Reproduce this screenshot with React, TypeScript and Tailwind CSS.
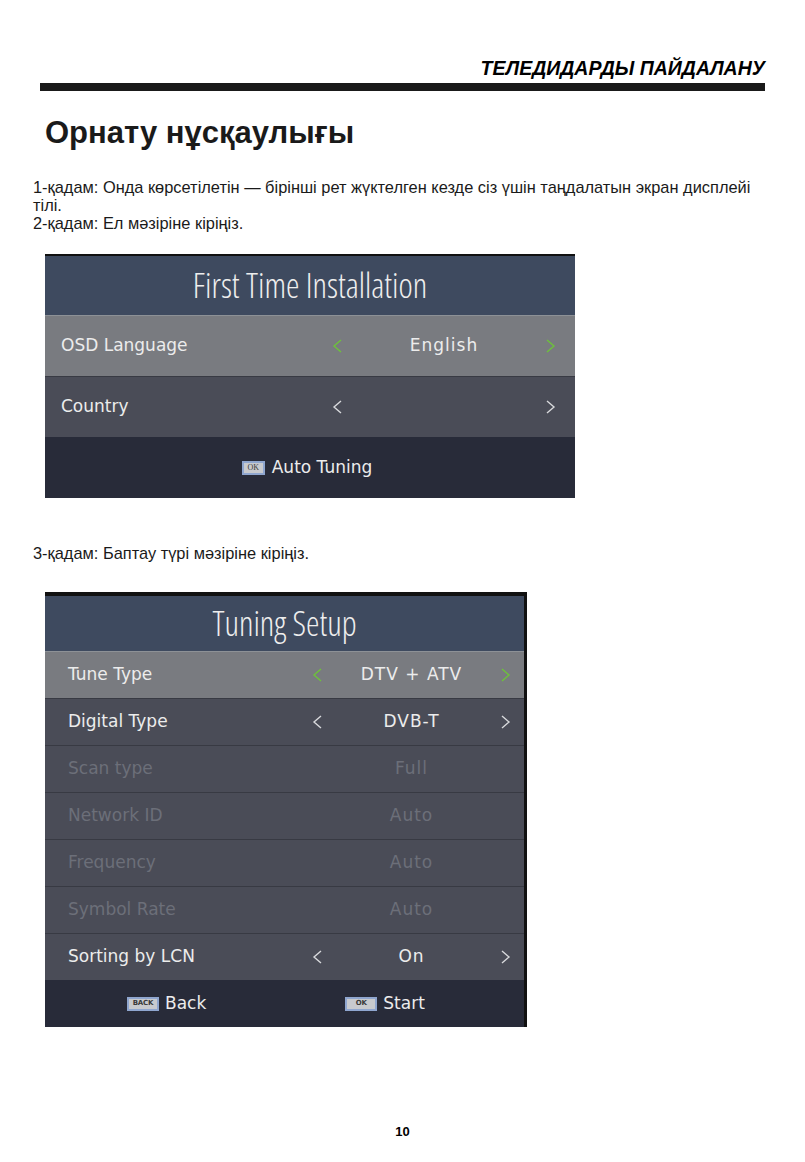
import type { ReactNode } from "react";

const doc = { fontFamily: '"Liberation Sans", Arial, sans-serif' };
const tv = { fontFamily: '"DejaVu Sans", Verdana, sans-serif' };
const tvTitle = { fontFamily: '"Open Sans", "DejaVu Sans", sans-serif', fontStretch: "condensed" as const };

function Chevron({ dir, green }: { dir: "l" | "r"; green?: boolean }) {
  return (
    <svg width="11" height="16" viewBox="0 0 11 16" className="shrink-0">
      <polyline
        points={dir === "l" ? "9,2 2,8 9,14" : "2,2 9,8 2,14"}
        fill="none"
        stroke={green ? "#6dc23a" : "#d8d9dc"}
        strokeWidth="1.4"
      />
    </svg>
  );
}

function KeyIcon({ label, wide }: { label: string; wide?: boolean }) {
  return (
    <span
      className={`inline-flex h-[14px] items-center justify-center border-2 border-[#8fa6cf] bg-[#c8cace] text-[#3a3a3a] ${
        wide ? "w-[32px] text-[7px] font-bold tracking-tight" : "w-[23px] text-[8px]"
      }`}
      style={{ fontFamily: wide ? '"DejaVu Sans", sans-serif' : '"Liberation Serif", serif' }}
    >
      {label}
    </span>
  );
}

type RowProps = {
  label: string;
  value?: string;
  active?: boolean;
  disabled?: boolean;
  arrows?: boolean;
  cols: string;
  h: string;
  pad: string;
  first?: boolean;
};

function Row({ label, value, active, disabled, arrows = true, cols, h, pad, first }: RowProps) {
  const bg = active ? "bg-[#797b80]" : "bg-[#4a4c57]";
  const line = first ? "border-[#8d9196]" : "border-[#383a43]";
  const text = disabled ? "text-[#6c6f79]" : "text-[#ececec]";
  return (
    <div className={`grid ${cols} ${h} ${pad} ${bg} items-center border-t ${line} ${text} text-[17px]`} style={tv}>
      <span>{label}</span>
      <span>{arrows && <Chevron dir="l" green={active} />}</span>
      <span className="text-center tracking-[1px]">{value}</span>
      <span>{arrows && <Chevron dir="r" green={active} />}</span>
    </div>
  );
}

function Footer({ children, h }: { children: ReactNode; h: string }) {
  return (
    <div className={`flex ${h} items-center bg-[#282b39] text-[17px] text-[#ececec]`} style={tv}>
      {children}
    </div>
  );
}

export default function App() {
  const cols1 = "grid-cols-[271px_11px_202px_11px]";
  const cols2 = "grid-cols-[244px_11px_177px_11px]";
  return (
    <div className="min-h-[1162px] w-[805px] bg-white text-black" style={doc}>
      <div className="flex flex-col pt-[57px]">
        <div className="pr-[40px] text-right text-[19.5px] leading-[22px] font-bold italic">ТЕЛЕДИДАРДЫ ПАЙДАЛАНУ</div>
        <div className="mx-[40px] mt-[4px] h-[8px] bg-[#1a1a1a]" />
      </div>

      <h1 className="mt-[24px] pl-[45px] text-[31px] leading-[36px] font-bold text-[#1a1a1a]">Орнату нұсқаулығы</h1>

      <div className="mt-[27px] pl-[33px] pr-[40px] text-[16.4px] leading-[18px] text-[#1a1a1a]">
        <p>1-қадам: Онда көрсетілетін — бірінші рет жүктелген кезде сіз үшін таңдалатын экран дисплейі тілі.</p>
        <p>2-қадам: Ел мәзіріне кіріңіз.</p>
      </div>

      <div className="ml-[45px] mt-[22px] flex w-[530px] flex-col border-t-[2px] border-[#111]">
        <div className="flex h-[59px] items-center justify-center bg-[#3e4a5f] text-[34px] font-light text-[#eeeeee]" style={tvTitle}>
          First Time Installation
        </div>
        <Row label="OSD Language" value="English" active first cols={cols1} h="h-[61px]" pad="pl-[16px]" />
        <Row label="Country" value="" cols={cols1} h="h-[61px]" pad="pl-[16px]" />
        <Footer h="h-[61px]">
          <div className="flex w-full items-center justify-center gap-[7px] pr-[6px]">
            <KeyIcon label="OK" />
            <span>Auto Tuning</span>
          </div>
        </Footer>
      </div>

      <p className="mt-[46px] pl-[33px] text-[16.4px] leading-[18px] text-[#1a1a1a]">3-қадам: Баптау түрі мәзіріне кіріңіз.</p>

      <div className="ml-[45px] mt-[30px] flex w-[482px] flex-col border-t-[4px] border-r-[3px] border-[#111]">
        <div className="flex h-[55px] items-center justify-center bg-[#3e4a5f] text-[34px] font-light text-[#eeeeee]" style={tvTitle}>
          Tuning Setup
        </div>
        <Row label="Tune Type" value="DTV + ATV" active first cols={cols2} h="h-[47px]" pad="pl-[23px]" />
        <Row label="Digital Type" value="DVB-T" cols={cols2} h="h-[47px]" pad="pl-[23px]" />
        <Row label="Scan type" value="Full" disabled arrows={false} cols={cols2} h="h-[47px]" pad="pl-[23px]" />
        <Row label="Network ID" value="Auto" disabled arrows={false} cols={cols2} h="h-[47px]" pad="pl-[23px]" />
        <Row label="Frequency" value="Auto" disabled arrows={false} cols={cols2} h="h-[47px]" pad="pl-[23px]" />
        <Row label="Symbol Rate" value="Auto" disabled arrows={false} cols={cols2} h="h-[47px]" pad="pl-[23px]" />
        <Row label="Sorting by LCN" value="On" cols={cols2} h="h-[47px]" pad="pl-[23px]" />
        <Footer h="h-[47px]">
          <div className="flex items-center gap-[6px] pl-[82px]">
            <KeyIcon label="BACK" wide />
            <span>Back</span>
          </div>
          <div className="flex items-center gap-[6px] pl-[139px]">
            <KeyIcon label="OK" wide />
            <span>Start</span>
          </div>
        </Footer>
      </div>

      <div className="mt-[97px] text-center text-[13px] leading-[16px] font-bold">10</div>
    </div>
  );
}
